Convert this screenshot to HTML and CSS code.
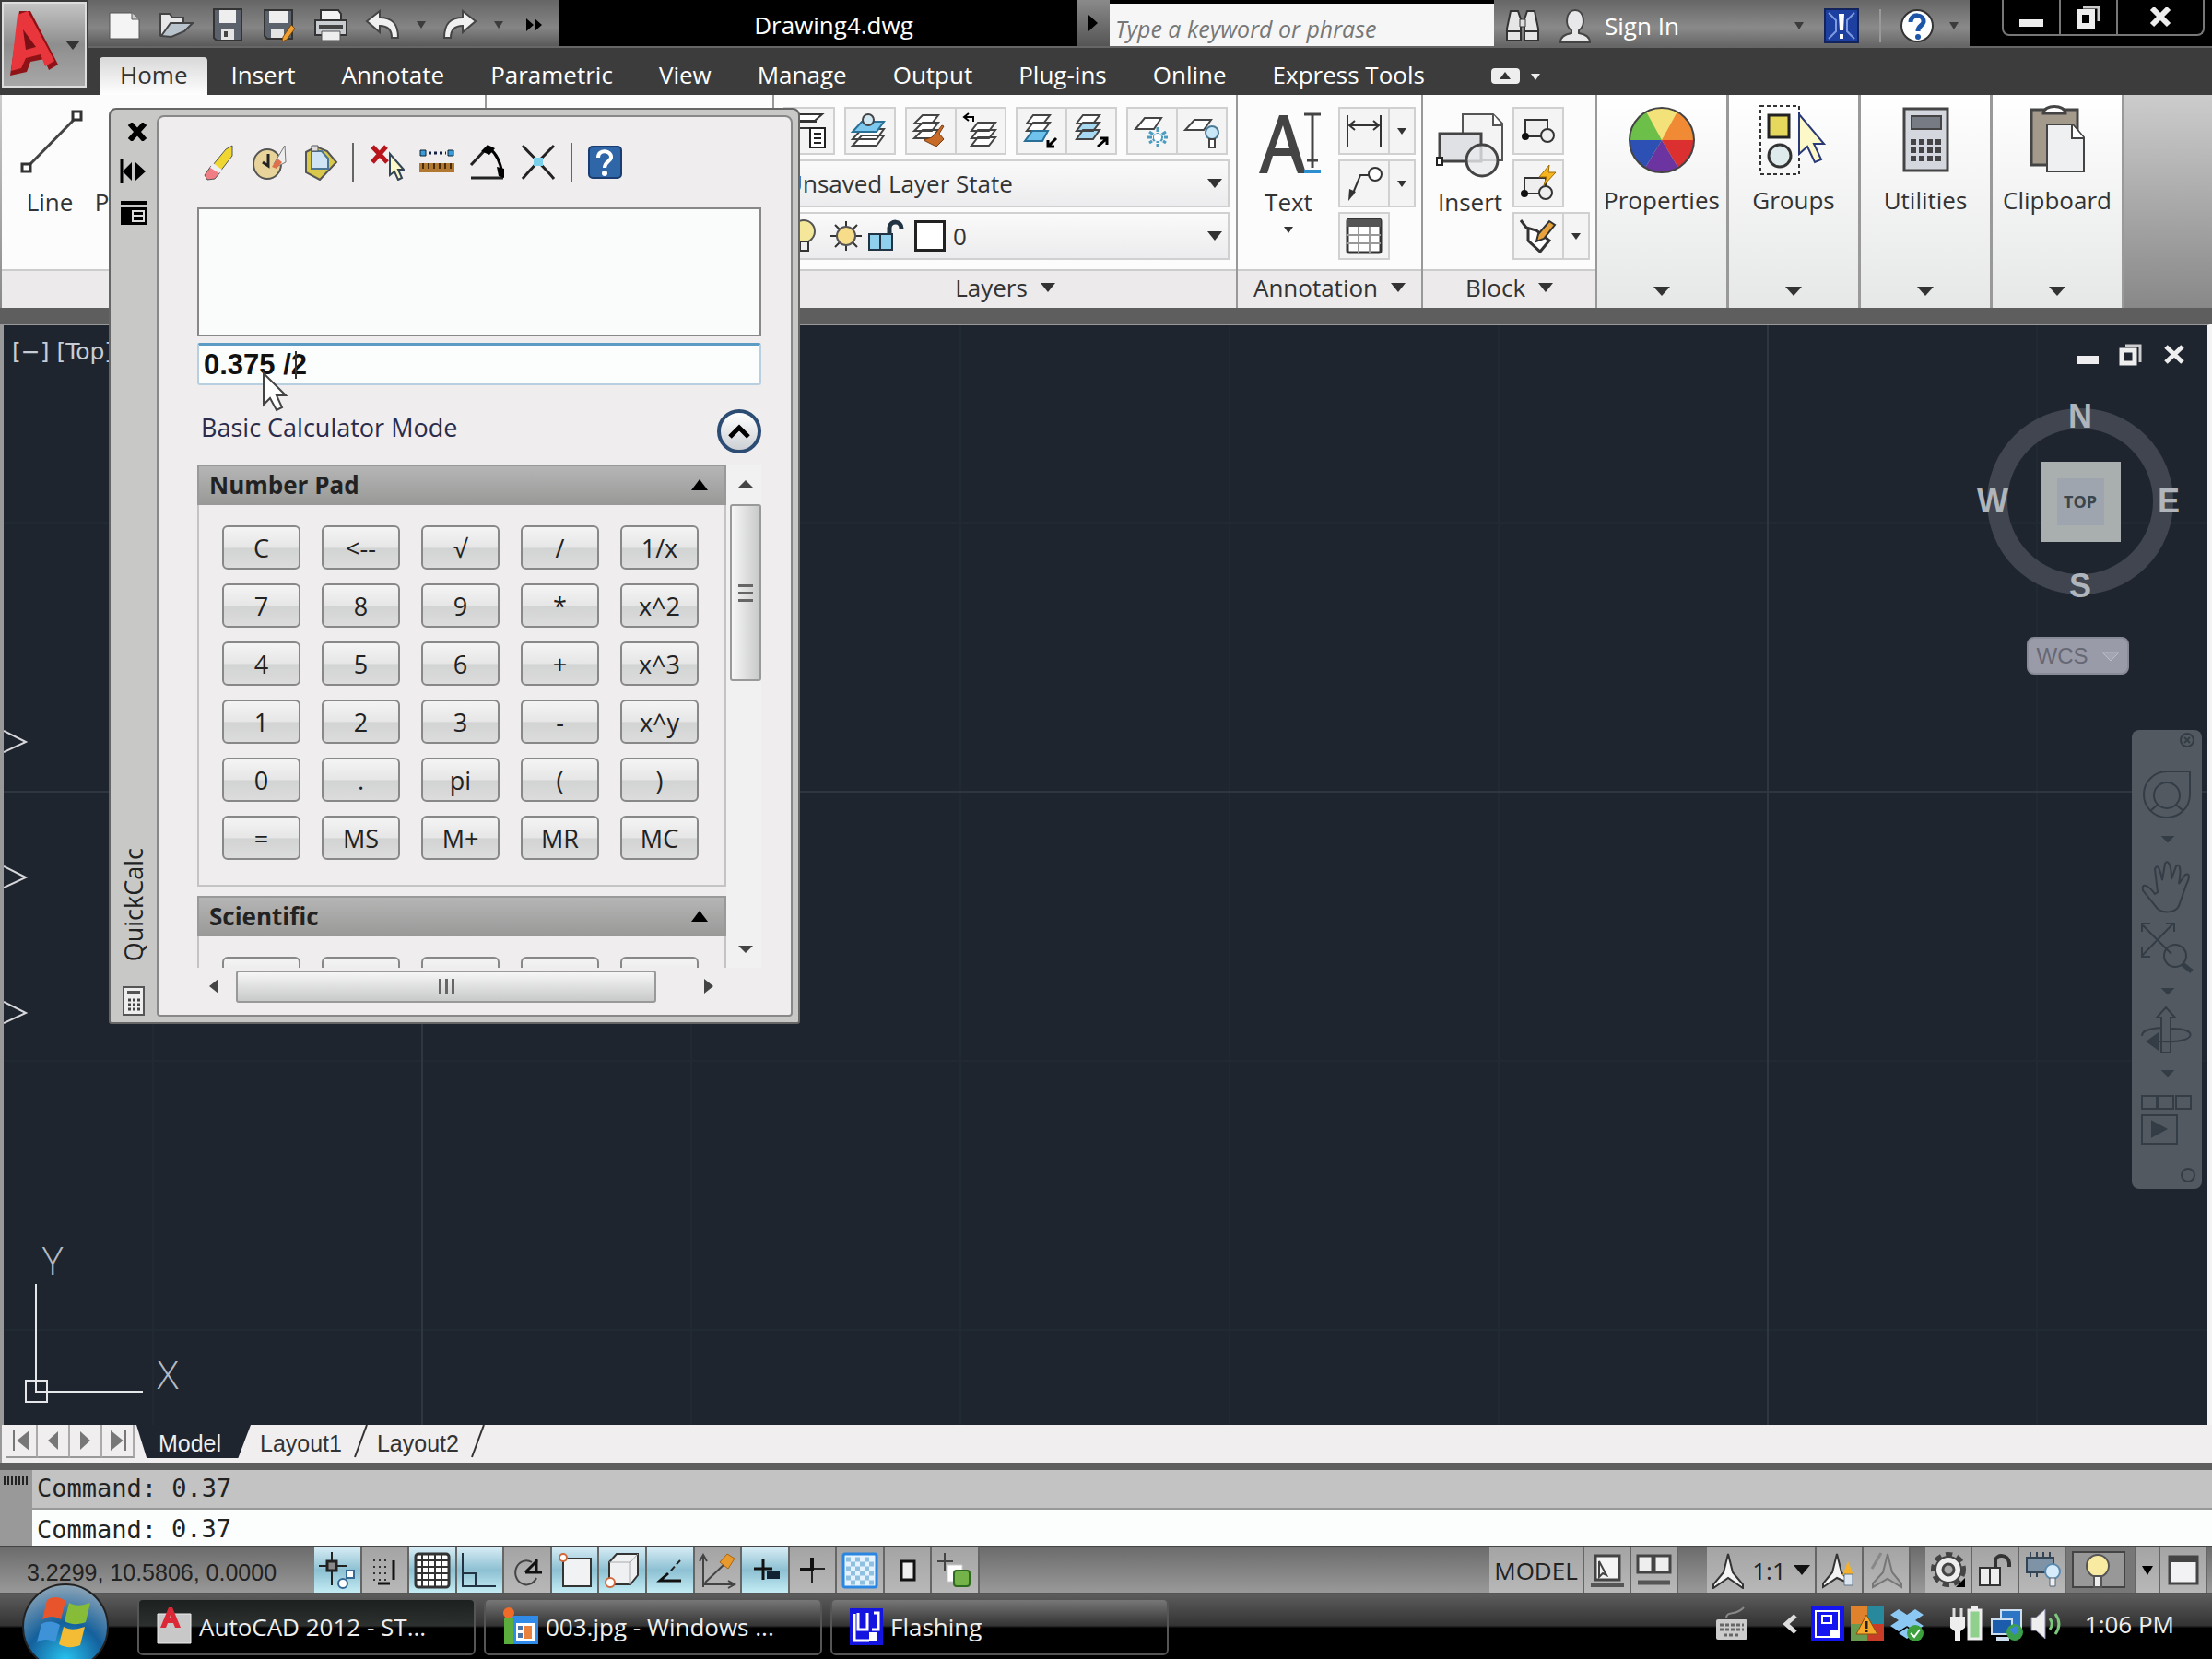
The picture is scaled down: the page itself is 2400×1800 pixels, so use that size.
FILE: index.html
```html
<!DOCTYPE html>
<html lang="en">
<head>
    <meta charset="UTF-8">
    <meta name="viewport" content="width=device-width, initial-scale=1.0">
    <title>Drawing4.dwg</title>
    <link rel="stylesheet" href="styles.css">
</head>
<body>

    <!-- Title bar and ribbon tabs -->
    <header class="header">
        <button class="app-button" aria-label="Application menu">
            <svg width="90" height="90" viewBox="0 0 90 90">
                <path d="M18 8 30 8 60 66 50 72 45 60 30 63 26 74 8 78Z" fill="#8e1216"/>
                <path d="M16 12 27 8 56 62 46 68 41 55 25 59 20 70 9 73Z" fill="#e8363c"/>
                <path d="M22 28 36 47 25 50Z" fill="#7a1015"/>
                <path d="M68 40 84 40 76 50Z" fill="#333"/>
            </svg>
        </button>

        <div class="titlebar">
            <div class="quick-access">
                <button class="qa" aria-label="New"><svg width="36" height="36" viewBox="0 0 36 36"><path d="M2 5H26L34 12V33H2Z" fill="#f4f4f4" stroke="#555"/><path d="M26 5V12H34" fill="#ccc" stroke="#555"/></svg></button>
                <button class="qa" aria-label="Open"><svg width="38" height="36" viewBox="0 0 38 36"><path d="M2 30V6H12L15 10H27V16" fill="#e8e8ea" stroke="#444" stroke-width="2"/><path d="M3 30 13 16H37L28 25 14 31Z" fill="#b9c3cc" stroke="#444" stroke-width="2"/></svg></button>
                <button class="qa" aria-label="Save"><svg width="34" height="38" viewBox="0 0 34 38"><path d="M2 2H32V36H5L2 33Z" fill="#5b626b" stroke="#333" stroke-width="2"/><path d="M8 3H26V17H8Z" fill="#eee"/><path d="M10 24H24V35H10Z" fill="#e4e4e4"/><path d="M13 26H17V32H13Z" fill="#444"/></svg></button>
                <button class="qa" aria-label="Save As"><svg width="36" height="38" viewBox="0 0 36 38"><path d="M2 3H32V34H5L2 31Z" fill="#5b626b" stroke="#333" stroke-width="2"/><path d="M7 4H27V17H7Z" fill="#eee"/><path d="M9 23H23V33H9Z" fill="#e4e4e4"/><path d="M31 19 35 23 26 35 21 37 22 32Z" fill="#f0a030" stroke="#7a4a10"/></svg></button>
                <button class="qa" aria-label="Plot"><svg width="38" height="38" viewBox="0 0 38 38"><path d="M8 3H27L30 7V15H8Z" fill="#f4f4f4" stroke="#333" stroke-width="2"/><path d="M2 14H36V30H2Z" fill="#c9ccd0" stroke="#333" stroke-width="2"/><path d="M6 19H32V23H6Z" fill="#444"/><path d="M9 26H29V36H9Z" fill="#eee" stroke="#555"/></svg></button>
                <button class="qa" aria-label="Undo"><svg width="38" height="34" viewBox="0 0 38 34"><path d="M2 13 16 2V9C29 9 36 15 36 31H29C29 23 25 18 16 18V25Z" fill="#f0f0f0" stroke="#444" stroke-width="2"/></svg></button>
                <button class="qa-arrow" aria-label="Undo list"><svg width="10" height="8"><path d="M0 0H10L5 8Z" fill="#3c3c3c"/></svg></button>
                <button class="qa" aria-label="Redo"><svg width="38" height="34" viewBox="0 0 38 34"><path d="M36 13 22 2V9C9 9 2 15 2 31H9C9 23 13 18 22 18V25Z" fill="#f0f0f0" stroke="#444" stroke-width="2"/></svg></button>
                <button class="qa-arrow" aria-label="Redo list"><svg width="10" height="8"><path d="M0 0H10L5 8Z" fill="#3c3c3c"/></svg></button>
                <button class="qa-more" aria-label="More tools"><svg width="18" height="14"><path d="M0 0 8 7 0 14ZM9 0 17 7 9 14Z" fill="#000"/></svg></button>
            </div>
            <h1 class="title">Drawing4.dwg</h1>
            <button class="search-toggle" aria-label="Collapse search"><svg width="10" height="18"><path d="M0 0 10 9 0 18Z" fill="#000"/></svg></button>
            <input class="search" type="text" placeholder="Type a keyword or phrase" aria-label="Type a keyword or phrase">
            <div class="info-center">
                <button class="qa" aria-label="Search"><svg width="38" height="38" viewBox="0 0 38 38"><path d="M6 3H14L17 12V35H2V22Z M24 3H32L36 22V35H21V12Z" fill="#e6e6e6" stroke="#333" stroke-width="2"/><path d="M16 12H22V20H16Z" fill="#ddd" stroke="#333"/><path d="M3 25H16M22 25H35" stroke="#333" stroke-width="2"/></svg></button>
                <button class="sign-in"><svg width="36" height="40" viewBox="0 0 36 40"><path d="M2 38C2 31 8 29 14 28V25C6 20 8 3 18 3S30 20 22 25V28C28 29 34 31 34 38Z" fill="#e8e8ea" stroke="#444" stroke-width="2"/></svg>Sign In</button>
                <button class="qa-arrow sign-arrow" aria-label="Sign in menu"><svg width="10" height="8"><path d="M0 0H10L5 8Z" fill="#3c3c3c"/></svg></button>
                <button class="qa" aria-label="Exchange"><svg width="38" height="38" viewBox="0 0 38 38"><path d="M1 1H37V37H1Z" fill="#1c3fa0" stroke="#13235c" stroke-width="2"/><path d="M5 5 13 13V25L5 33M33 5 25 13V25L33 33" fill="none" stroke="#7f9ae0" stroke-width="2"/><path d="M16 6H22L21 24H17ZM17 28H21V33H17Z" fill="#fff"/></svg></button>
                <span class="info-line"></span>
                <button class="qa" aria-label="Help"><svg width="38" height="38" viewBox="0 0 38 38"><circle cx="19" cy="19" r="17" fill="#fff" stroke="#333" stroke-width="2"/><path d="M12 15C12 5 27 6 26 15C25 19 20 19 20 25" fill="none" stroke="#1d55a8" stroke-width="5"/><circle cx="20" cy="31" r="3" fill="#1d55a8"/></svg></button>
                <button class="qa-arrow" aria-label="Help menu"><svg width="10" height="8"><path d="M0 0H10L5 8Z" fill="#3c3c3c"/></svg></button>
            </div>
            <div class="window-area">
                <div class="window-buttons">
                    <button class="win" aria-label="Minimize"><svg width="26" height="28"><path d="M0 16H26V24H0Z" fill="#eee"/></svg></button>
                    <button class="win" aria-label="Restore"><svg width="28" height="28"><path d="M8 3H25V18" fill="none" stroke="#ccc" stroke-width="3"/><path d="M4 8H18V23H4Z" fill="none" stroke="#eee" stroke-width="6"/></svg></button>
                    <button class="win win-close" aria-label="Close"><svg width="24" height="22"><path d="M3 1 21 19M21 1 3 19" stroke="#eee" stroke-width="6"/></svg></button>
                </div>
            </div>
        </div>

        <nav class="tabs">
            <a class="tab active" href="#">Home</a>
            <a class="tab" href="#">Insert</a>
            <a class="tab" href="#">Annotate</a>
            <a class="tab" href="#">Parametric</a>
            <a class="tab" href="#">View</a>
            <a class="tab" href="#">Manage</a>
            <a class="tab" href="#">Output</a>
            <a class="tab" href="#">Plug-ins</a>
            <a class="tab" href="#">Online</a>
            <a class="tab" href="#">Express Tools</a>
            <button class="ribbon-toggle" aria-label="Minimize ribbon"><svg width="56" height="20"><rect x="1" y="1" width="31" height="17" rx="4" fill="#eee"/><path d="M10 13 16 5 22 13Z" fill="#333"/><path d="M44 7H54L49 14Z" fill="#eee"/></svg></button>
        </nav>
    </header>

    <!-- Ribbon -->
    <section class="ribbon">
        <div class="panel panel-draw">
            <div class="panel-body">
                <button class="big"><svg width="78" height="78" viewBox="0 0 78 78"><path d="M14 66 68 11" stroke="#444" stroke-width="3"/><path d="M9 62H18V70H9ZM64 5H73V14H64Z" fill="#fff" stroke="#333" stroke-width="3"/></svg>Line</button>
                <button class="big"><svg width="78" height="78" viewBox="0 0 78 78"><path d="M14 66V30H60" fill="none" stroke="#444" stroke-width="3"/></svg>Polyline</button>
            </div>
            <div class="panel-title"></div>
        </div>
        <div class="panel panel-modify">
            <div class="panel-body"></div>
            <div class="panel-title"></div>
        </div>

        <div class="panel panel-layers">
            <div class="panel-stack">
                <div class="row end">
                    <div class="group">
                        <button class="tool" aria-label="Layer properties"><svg width="44" height="42" viewBox="0 0 44 42"><path d="M10 3H36L28 10H2ZM10 11H30M10 18H24" fill="#fff" stroke="#333" stroke-width="2"/><path d="M23 18H39V39H23Z" fill="#fff" stroke="#222" stroke-width="2"/><path d="M27 24H35M27 29H35M27 34H35" stroke="#222" stroke-width="2"/></svg></button>
                    </div>
                    <div class="group">
                        <button class="tool" aria-label="Make current"><svg width="44" height="42" viewBox="0 0 44 42"><path d="M13 26H37L29 37H3ZM13 19H37L29 30H3Z" fill="#fff" stroke="#444" stroke-width="2"/><path d="M13 11H37L29 22H3Z" fill="#7cc8ee" stroke="#2a6f96" stroke-width="2"/><circle cx="20" cy="9" r="6" fill="#cfe8f4" stroke="#444" stroke-width="2"/></svg></button>
                    </div>
                    <div class="group">
                        <button class="tool" aria-label="Match layer"><svg width="44" height="42" viewBox="0 0 44 42"><path d="M13 20H30L23 29H4ZM13 12H30L23 21H4ZM13 4H30L23 13H4Z" fill="#fff" stroke="#444" stroke-width="2"/><path d="M36 16 31 24 36 30 28 38 14 31 23 28 27 24 34 15Z" fill="#c76b28" stroke="#7a3b10"/></svg></button>
                        <button class="tool" aria-label="Layer previous"><svg width="44" height="42" viewBox="0 0 44 42"><path d="M19 28H38L31 37H12ZM19 20H38L31 29H12ZM19 12H38L31 21H12Z" fill="#fff" stroke="#444" stroke-width="2"/><path d="M4 6H14V11M9 2 4 6 9 10" fill="none" stroke="#000" stroke-width="2"/></svg></button>
                    </div>
                    <div class="group">
                        <button class="tool" aria-label="Isolate layer"><svg width="44" height="42" viewBox="0 0 44 42"><path d="M13 12H31L24 21H6ZM13 4H31L24 13H6Z" fill="#fff" stroke="#444" stroke-width="2"/><path d="M12 21H29L23 32H4Z" fill="#6fc2ec" stroke="#2a6f96" stroke-width="2"/><path d="M38 29 30 37M29 31V38H36" fill="none" stroke="#000" stroke-width="3"/></svg></button>
                        <button class="tool" aria-label="Unisolate layer"><svg width="44" height="42" viewBox="0 0 44 42"><path d="M13 4H31L24 13H6Z" fill="#fff" stroke="#444" stroke-width="2"/><path d="M13 12H31L24 21H6ZM13 20H31L24 30H6Z" fill="#a8d9f2" stroke="#444" stroke-width="2"/><path d="M29 38 38 30M31 29H39V36" fill="none" stroke="#000" stroke-width="3"/></svg></button>
                    </div>
                    <div class="group">
                        <button class="tool" aria-label="Freeze layer"><svg width="44" height="42" viewBox="0 0 44 42"><path d="M14 7H32L24 19H4Z" fill="#fff" stroke="#444" stroke-width="2"/><path d="M28 17V39M19 22 37 34M37 22 19 34M17 28H39" stroke="#4a9cc0" stroke-width="3" stroke-dasharray="5 1"/><circle cx="28" cy="28" r="4" fill="#fff"/></svg></button>
                        <button class="tool" aria-label="Turn layer off"><svg width="44" height="42" viewBox="0 0 44 42"><path d="M14 9H32L24 20H4Z" fill="#fff" stroke="#444" stroke-width="2"/><circle cx="33" cy="23" r="7" fill="#c8e8f8" stroke="#4a7c98" stroke-width="2"/><path d="M30 30H36V39H30Z" fill="#fff" stroke="#444" stroke-width="2"/></svg></button>
                    </div>
                </div>
                <div class="row combo">
                    <select class="combo-select" aria-label="Layer state"><option>Unsaved Layer State</option></select>
                    <svg class="combo-arrow" width="16" height="10"><path d="M0 0H16L8 10Z" fill="#333"/></svg>
                </div>
                <div class="row combo">
                    <svg width="140" height="44" viewBox="0 0 140 44">
                        <circle cx="20" cy="17" r="12" fill="#f5e79a" stroke="#555" stroke-width="2"/><path d="M16 28H25V38H16Z" fill="#eee" stroke="#333" stroke-width="2"/>
                        <path d="M66 6V38M49 22H83M54 10 78 34M78 10 54 34" stroke="#333" stroke-width="2"/><circle cx="66" cy="22" r="10" fill="#f7dc8a" stroke="#555" stroke-width="2"/>
                        <path d="M91 20H116V37H91ZM103 20V37" fill="#8fd0ec" stroke="#234" stroke-width="2"/><path d="M113 20V13C114 5 126 5 126 14" fill="none" stroke="#234" stroke-width="5"/>
                    </svg>
                    <span class="swatch"></span>
                    <select class="combo-select layer-select" aria-label="Layer"><option>0</option></select>
                    <svg class="combo-arrow" width="16" height="10"><path d="M0 0H16L8 10Z" fill="#333"/></svg>
                </div>
            </div>
            <div class="panel-title">Layers <svg width="16" height="10"><path d="M0 0H16L8 10Z" fill="#333"/></svg></div>
        </div>

        <div class="panel panel-annotation">
            <div class="panel-body">
                <button class="big"><svg width="78" height="78" viewBox="0 0 78 78"><path d="M7 72 29 9H38L58 72H49L42 53H22L16 72ZM24 45H40L33 20Z" fill="#444" fill-rule="evenodd"/><path d="M56 8H74M65 8V66M59 58H71" stroke="#444" stroke-width="3"/><path d="M56 70H74" stroke="#2e8fd0" stroke-width="4"/></svg>Text<svg class="big-arrow" width="10" height="7"><path d="M0 0H10L5 7Z" fill="#333"/></svg></button>
                <div class="column">
                    <div class="group">
                        <button class="tool" aria-label="Linear dimension"><svg width="44" height="42" viewBox="0 0 44 42"><path d="M4 4V38M40 4V38M6 15H38M12 10 6 15 12 20M32 10 38 15 32 20" fill="none" stroke="#333" stroke-width="2"/></svg></button>
                        <button class="drop" aria-label="Dimension list"><svg width="10" height="7"><path d="M0 0H10L5 7Z" fill="#333"/></svg></button>
                    </div>
                    <div class="group">
                        <button class="tool" aria-label="Leader"><svg width="44" height="42" viewBox="0 0 44 42"><circle cx="34" cy="11" r="7" fill="#fff" stroke="#333" stroke-width="2"/><path d="M27 12H18L9 34" fill="none" stroke="#333" stroke-width="2"/><path d="M5 40 6 27 13 30Z" fill="#333"/></svg></button>
                        <button class="drop" aria-label="Leader list"><svg width="10" height="7"><path d="M0 0H10L5 7Z" fill="#333"/></svg></button>
                    </div>
                    <div class="group">
                        <button class="tool" aria-label="Table"><svg width="44" height="42" viewBox="0 0 44 42"><rect x="4" y="3" width="36" height="36" rx="2" fill="#fff" stroke="#333" stroke-width="3"/><path d="M4 3H40V11H4Z" fill="#555"/><path d="M4 20H40M4 29H40M16 11V39M28 11V39" stroke="#999" stroke-width="2"/></svg></button>
                    </div>
                </div>
            </div>
            <div class="panel-title">Annotation <svg width="16" height="10"><path d="M0 0H16L8 10Z" fill="#333"/></svg></div>
        </div>

        <div class="panel panel-block">
            <div class="panel-body">
                <button class="big"><svg width="78" height="78" viewBox="0 0 78 78"><path d="M31 8H64L74 18V58H31Z" fill="#f4f4f4" stroke="#555" stroke-width="2"/><path d="M64 8V20H74" fill="#fff" stroke="#555" stroke-width="2"/><path d="M6 29H51V59H6Z" fill="#dfe1e4" stroke="#444" stroke-width="3"/><circle cx="52" cy="58" r="17" fill="#e8eaec" fill-opacity="0.8" stroke="#444" stroke-width="3"/><path d="M3 55H9V63H3Z" fill="#fff" stroke="#222" stroke-width="2"/></svg>Insert</button>
                <div class="column">
                    <div class="group"><button class="tool" aria-label="Create block"><svg width="44" height="42" viewBox="0 0 44 42"><path d="M8 9H32V27H8Z" fill="#eee" stroke="#333" stroke-width="2"/><circle cx="32" cy="26" r="7" fill="#eee" stroke="#333" stroke-width="2"/><circle cx="8" cy="27" r="4" fill="#111"/></svg></button></div>
                    <div class="group"><button class="tool" aria-label="Edit block"><svg width="44" height="42" viewBox="0 0 44 42"><path d="M7 15H30V32H7Z" fill="#eee" stroke="#333" stroke-width="2"/><circle cx="30" cy="31" r="7" fill="#eee" stroke="#333" stroke-width="2"/><circle cx="7" cy="32" r="4" fill="#111"/><path d="M34 1 23 14H31L28 23 41 9H33Z" fill="#f5b51e" stroke="#a06a00"/></svg></button></div>
                    <div class="group"><button class="tool" aria-label="Edit attributes"><svg width="44" height="42" viewBox="0 0 44 42"><path d="M3 4 9 12 20 15 34 26 24 38 11 26V14" fill="#fff" stroke="#333" stroke-width="3"/><path d="M34 5 40 9 28 24 20 27 22 19Z" fill="#e8a23c" stroke="#333" stroke-width="2"/></svg></button><button class="drop" aria-label="Attribute list"><svg width="10" height="7"><path d="M0 0H10L5 7Z" fill="#333"/></svg></button></div>
                </div>
            </div>
            <div class="panel-title">Block <svg width="16" height="10"><path d="M0 0H16L8 10Z" fill="#333"/></svg></div>
        </div>

        <button class="panel panel-small">
            <svg width="78" height="78" viewBox="0 0 78 78"><circle cx="39" cy="39" r="35" fill="#f3e27a"/><path d="M39 39 22 8A35 35 0 0 0 4 39Z" fill="#6cc04a"/><path d="M39 39 56 8A35 35 0 0 1 74 39Z" fill="#f08a34"/><path d="M39 39H74A35 35 0 0 1 57 69Z" fill="#dc3030"/><path d="M39 39 57 69A35 35 0 0 1 21 69Z" fill="#6c34a0"/><path d="M39 39 21 69A35 35 0 0 1 4 39Z" fill="#2c50b4"/><circle cx="39" cy="39" r="35" fill="none" stroke="#444" stroke-width="2"/></svg>
            <span>Properties</span>
            <svg class="small-arrow" width="18" height="10"><path d="M0 0H18L9 10Z" fill="#333"/></svg>
        </button>
        <button class="panel panel-small">
            <svg width="78" height="78" viewBox="0 0 78 78"><path d="M3 2H45V76H3Z" fill="none" stroke="#333" stroke-width="2" stroke-dasharray="4 3"/><path d="M12 12H34V36H12Z" fill="#e6d85c" stroke="#222" stroke-width="3"/><circle cx="24" cy="56" r="12" fill="#dfeaec" stroke="#333" stroke-width="3"/><path d="M45 11V54L54 46 62 63 69 60 61 43H72Z" fill="#fdf8c8" stroke="#2a3a78" stroke-width="2"/></svg>
            <span>Groups</span>
            <svg class="small-arrow" width="18" height="10"><path d="M0 0H18L9 10Z" fill="#333"/></svg>
        </button>
        <button class="panel panel-small">
            <svg width="78" height="78" viewBox="0 0 78 78"><path d="M16 5H63V72H16Z" fill="#d4d8de" stroke="#444" stroke-width="3"/><path d="M24 13H56V27H24Z" fill="#777c84" stroke="#444" stroke-width="2"/><path d="M23 41H58M23 50H58M23 59H58" stroke="#444" stroke-width="6" stroke-dasharray="6 3"/></svg>
            <span>Utilities</span>
            <svg class="small-arrow" width="18" height="10"><path d="M0 0H18L9 10Z" fill="#333"/></svg>
        </button>
        <button class="panel panel-small">
            <svg width="78" height="78" viewBox="0 0 78 78"><path d="M11 6H61V66H11Z" fill="#a39a8c" stroke="#444" stroke-width="3"/><path d="M24 10C24 0 48 0 48 10Z" fill="#fff" stroke="#444" stroke-width="3"/><path d="M28 22H56L68 36V73H28Z" fill="#eef0f2" stroke="#444" stroke-width="2"/><path d="M55 22V37H68" fill="#fff" stroke="#444" stroke-width="2"/></svg>
            <span>Clipboard</span>
            <svg class="small-arrow" width="18" height="10"><path d="M0 0H18L9 10Z" fill="#333"/></svg>
        </button>
    </section>

    <!-- Drawing area -->
    <main class="canvas">
        <span class="view-label">[−] [Top]</span>

        <svg class="geometry" width="40" height="340"><path d="M0 6 24 18 0 29M0 153 24 165 0 176M0 300 24 312 0 323" fill="none" stroke="#d8d8dc" stroke-width="2"/></svg>

        <svg class="ucs" width="190" height="190">
            <path d="M15 50V167H131M4 155H27V178H4Z" fill="none" stroke="#e4e6ea" stroke-width="2"/>
            <text class="ucs-text" x="33" y="40" text-anchor="middle">Y</text>
            <text class="ucs-text" x="158" y="164" text-anchor="middle">X</text>
        </svg>

        <div class="doc-buttons">
            <button aria-label="Minimize drawing"><svg width="24" height="24"><path d="M0 13H24V22H0Z" fill="#eee"/></svg></button>
            <button aria-label="Restore drawing"><svg width="26" height="24"><path d="M7 2H23V20" fill="none" stroke="#ccc" stroke-width="3"/><path d="M3 7H17V21H3Z" fill="none" stroke="#eee" stroke-width="5"/></svg></button>
            <button aria-label="Close drawing"><svg width="24" height="24"><path d="M3 3 21 20M21 3 3 20" stroke="#eee" stroke-width="5"/></svg></button>
        </div>

        <div class="viewcube">
            <span class="north">N</span>
            <span class="west">W</span>
            <button class="cube-face"><span>TOP</span></button>
            <span class="east">E</span>
            <span class="south">S</span>
        </div>
        <button class="wcs">WCS <svg width="20" height="12"><path d="M1 2H19L10 11Z" fill="#a4a5b2" stroke="#bcbdc8"/></svg></button>

        <div class="navbar">
            <svg width="76" height="498" fill="none" stroke="#343c45" stroke-width="2">
                <circle cx="60" cy="11" r="7"/><path d="M57 8 63 14M63 8 57 14"/>
                <path d="M63 45H38A25 25 0 1 0 63 71Z"/><circle cx="38" cy="71" r="14"/><path d="M20 88 28 81M56 88 48 81"/>
                <path d="M34 116H44L39 121Z" fill="#343c45"/>
                <path d="M12 174C10 166 17 167 25 178L28 176 25 151C27 146 30 147 33 163L36 145C38 141 43 143 43 162L48 148C52 144 54 150 51 167L58 157C63 155 63 160 59 168L51 191C47 199 34 199 28 194Z"/>
                <path d="M12 212 43 243M45 210 11 245M11 219V210H20M37 210H46V219M11 236V246H20"/><circle cx="47" cy="245" r="12"/><path d="M55 254 65 262" stroke-width="5"/>
                <path d="M34 281H44L39 286Z" fill="#343c45"/>
                <path d="M32 350V312H27L37 301 47 312H42V350ZM42 324C72 323 72 340 34 338H18M32 323C16 324 11 327 11 332"/><path d="M28 330V346L17 338Z" fill="#343c45"/>
                <path d="M34 370H44L39 375Z" fill="#343c45"/>
                <path d="M11 397H27V411H11ZM29 397H45V411H29ZM48 397H64V411H48ZM11 418H49V449H11Z"/><path d="M22 425V441L37 433Z" fill="#343c45"/>
                <circle cx="61" cy="483" r="7"/>
            </svg>
        </div>
    </main>

    <!-- Layout tabs -->
    <div class="layouts">
        <button class="step" aria-label="First"><svg width="20" height="22"><path d="M2 0V22M18 2V20L7 11Z" fill="#777" stroke="#777" stroke-width="2"/></svg></button>
        <button class="step" aria-label="Previous"><svg width="20" height="22"><path d="M15 1V21L4 11Z" fill="#777"/></svg></button>
        <button class="step" aria-label="Next"><svg width="20" height="22"><path d="M4 1V21L15 11Z" fill="#777"/></svg></button>
        <button class="step" aria-label="Last"><svg width="20" height="22"><path d="M18 0V22M3 2V20L14 11Z" fill="#777" stroke="#777" stroke-width="2"/></svg></button>
        <button class="layout-tab current">Model</button>
        <button class="layout-tab">Layout1</button>
        <svg class="slash" width="16" height="36"><path d="M15 0 2 35" stroke="#333" stroke-width="2"/></svg>
        <button class="layout-tab">Layout2</button>
        <svg class="slash" width="16" height="36"><path d="M15 0 2 35" stroke="#333" stroke-width="2"/></svg>
    </div>

    <!-- Command window -->
    <section class="command">
        <div class="grip"></div>
        <div class="command-lines">
            <div class="history">Command: 0.37</div>
            <label class="prompt"><span>Command:</span><input type="text" value="0.37" aria-label="Command"></label>
        </div>
    </section>

    <!-- Status bar -->
    <footer class="status">
        <span class="coords">3.2299, 10.5806, 0.0000</span>
        <div class="toggles">
            <button class="on" aria-label="Infer constraints"><svg width="44" height="44" viewBox="0 0 44 44"><path d="M16 2V38M2 17H32" stroke="#222" stroke-width="2"/><path d="M11 12H21V22H11Z" fill="#888" stroke="#222" stroke-width="3"/><circle cx="28" cy="36" r="5" fill="#fff" stroke="#356a94" stroke-width="2"/><path d="M32 22H40V30H32Z" fill="#fff" stroke="#356a94" stroke-width="2"/></svg></button>
            <button aria-label="Snap"><svg width="44" height="44" viewBox="0 0 44 44"><path d="M10 11H28M10 18H28M10 25H28M10 32H28" stroke="#333" stroke-width="2" stroke-dasharray="2 4"/><path d="M32 11V32M15 36H28" stroke="#111" stroke-width="3"/></svg></button>
            <button class="on" aria-label="Grid"><svg width="44" height="44" viewBox="0 0 44 44"><rect x="4" y="4" width="36" height="36" rx="3" fill="#fff" stroke="#333" stroke-width="3"/><path d="M4 11H40M4 18H40M4 25H40M4 32H40M11 4V40M18 4V40M25 4V40M32 4V40" stroke="#333" stroke-width="2"/></svg></button>
            <button class="on" aria-label="Ortho"><svg width="44" height="44" viewBox="0 0 44 44"><path d="M4 3V39H40M4 25H18V39" fill="none" stroke="#234" stroke-width="2"/></svg></button>
            <button aria-label="Polar"><svg width="44" height="44" viewBox="0 0 44 44"><path d="M27 13A12 13 0 1 0 32 30" fill="none" stroke="#444" stroke-width="2"/><path d="M20 24 33 11M20 24H38M32 10V24" fill="none" stroke="#111" stroke-width="3"/></svg></button>
            <button class="on" aria-label="Object snap"><svg width="44" height="44" viewBox="0 0 44 44"><path d="M9 9H39V39H9Z" fill="#f0f2f4" stroke="#333" stroke-width="2"/><circle cx="9" cy="8" r="4" fill="#fff" stroke="#d2693c" stroke-width="2"/></svg></button>
            <button class="on" aria-label="3D object snap"><svg width="44" height="44" viewBox="0 0 44 44"><path d="M8 13 16 4H39V27L31 37H8Z" fill="#eef0f2" stroke="#333" stroke-width="2"/><path d="M31 37V13H8M31 13 39 4" fill="none" stroke="#aaa"/><circle cx="9" cy="35" r="5" fill="#fff" stroke="#d2693c" stroke-width="2"/></svg></button>
            <button class="on" aria-label="Object tracking"><svg width="44" height="44" viewBox="0 0 44 44"><path d="M33 11 22 23" stroke="#222" stroke-width="2" stroke-dasharray="6 3"/><path d="M20 25 11 33H34" fill="none" stroke="#111" stroke-width="3"/></svg></button>
            <button aria-label="Dynamic UCS"><svg width="44" height="44" viewBox="0 0 44 44"><path d="M7 40V6M3 12 7 5 11 12M7 37H40M34 33 41 37 34 41M9 35 30 15" fill="none" stroke="#444" stroke-width="2"/><path d="M33 4 41 9 34 20 25 13Z" fill="#e99a2c" stroke="#a86414"/></svg></button>
            <button class="on" aria-label="Dynamic input"><svg width="44" height="44" viewBox="0 0 44 44"><path d="M20 10V32M10 20H30" stroke="#111" stroke-width="3"/><path d="M24 23H38V31H24Z" fill="#123"/></svg></button>
            <button aria-label="Lineweight"><svg width="44" height="44" viewBox="0 0 44 44"><path d="M22 22V36M22 20H36" stroke="#222" stroke-width="2"/><path d="M22 8V21H9" fill="none" stroke="#111" stroke-width="4"/></svg></button>
            <button aria-label="Transparency"><svg width="44" height="44" viewBox="0 0 44 44"><rect x="4" y="4" width="36" height="36" rx="2" fill="#e4f3ff" stroke="#2a86e0" stroke-width="3"/><path d="M7 10H37M7 20H37M7 30H37" stroke="#8fc0e0" stroke-width="5" stroke-dasharray="5 5"/><path d="M12 15H37M12 25H37M12 35H37" stroke="#8fc0e0" stroke-width="5" stroke-dasharray="5 5"/></svg></button>
            <button aria-label="Quick properties"><svg width="44" height="44" viewBox="0 0 44 44"><path d="M15 12H29V32H15Z" fill="#eee" stroke="#111" stroke-width="3"/></svg></button>
            <button aria-label="Selection cycling"><svg width="44" height="44" viewBox="0 0 44 44"><path d="M11 3V22M3 12H20" stroke="#444" stroke-width="2"/><path d="M14 16H30V34H14Z" fill="#fff" stroke="#ccc"/><rect x="21" y="22" width="17" height="17" rx="3" fill="#74b24a" stroke="#2f6b1c" stroke-width="2"/></svg></button>
        </div>
        <div class="status-right">
            <button class="model">MODEL</button>
            <button aria-label="Layout"><svg width="44" height="44" viewBox="0 0 44 44"><path d="M9 6H35V32H9Z" fill="#f4f4f4" stroke="#444" stroke-width="3"/><path d="M13 29V12L21 27 17 25Z" fill="none" stroke="#444" stroke-width="2"/><path d="M4 38H40" stroke="#555" stroke-width="4"/></svg></button>
            <button aria-label="Quick view"><svg width="44" height="44" viewBox="0 0 44 44"><path d="M4 6H20V24H4ZM22 6H39V24H22Z" fill="#eee" stroke="#444" stroke-width="3"/><path d="M4 35H39" stroke="#555" stroke-width="5"/></svg></button>
            <span class="space"></span>
            <button class="scale"><svg width="36" height="40" viewBox="0 0 36 40"><path d="M18 2 23 22 34 35V39L18 28 2 39V35L13 22Z" fill="#f4f4f4" stroke="#333" stroke-width="2"/></svg>1:1<svg width="18" height="11"><path d="M0 0H18L9 11Z" fill="#111"/></svg></button>
            <button aria-label="Annotation visibility"><svg width="44" height="44" viewBox="0 0 44 44"><path d="M19 4 24 24 35 37 19 30 4 40V36L14 24Z" fill="#f4f4f4" stroke="#333" stroke-width="2"/><path d="M31 12 25 27H37Z" fill="#f4b02a"/><path d="M27 26H36V38H27Z" fill="#dbe6f0" stroke="#678"/></svg></button>
            <button aria-label="Auto scale"><svg width="44" height="44" viewBox="0 0 44 44"><path d="M23 4 28 24 38 36V40L23 31 7 40V36L18 24Z" fill="#aaa" stroke="#777" stroke-width="2"/><path d="M16 3 6 20" stroke="#888" stroke-width="3"/></svg></button>
            <span class="space narrow"></span>
            <button aria-label="Workspace"><svg width="44" height="44" viewBox="0 0 44 44"><circle cx="22" cy="21" r="16" fill="none" stroke="#444" stroke-width="6" stroke-dasharray="7 5"/><circle cx="22" cy="21" r="14" fill="#eee" stroke="#444" stroke-width="2"/><circle cx="22" cy="21" r="6" fill="#aaa" stroke="#444" stroke-width="3"/><path d="M40 30V40H30Z" fill="#000"/></svg></button>
            <button aria-label="Lock"><svg width="44" height="44" viewBox="0 0 44 44"><path d="M5 19H27V38H5ZM16 19V38" fill="#eee" stroke="#333" stroke-width="2"/><path d="M22 18V11C23 4 36 4 37 14V18" fill="none" stroke="#333" stroke-width="4"/></svg></button>
            <button aria-label="Hardware acceleration"><svg width="44" height="44" viewBox="0 0 44 44"><path d="M5 8H34V24H5Z" fill="#7f93a6" stroke="#345" stroke-width="2"/><path d="M9 2V8M16 2V8M23 2V8M30 2V8M9 24V29M16 24V29" stroke="#345" stroke-width="2"/><circle cx="33" cy="23" r="8" fill="#d6ecfa" stroke="#5a8ab0" stroke-width="2"/><path d="M30 30H36V39H30Z" fill="#eee" stroke="#567"/></svg></button>
            <button class="bulb" aria-label="Isolate objects"><svg width="64" height="44" viewBox="0 0 64 44"><path d="M2 2H58V40H2Z" fill="#989898" stroke="#444" stroke-width="2"/><circle cx="29" cy="17" r="12" fill="#f8eaa0" stroke="#555" stroke-width="2"/><path d="M25 28H33V40H25Z" fill="#eee" stroke="#555" stroke-width="2"/></svg></button>
            <button class="thin" aria-label="Status menu"><svg width="12" height="10"><path d="M0 0H12L6 10Z" fill="#000"/></svg></button>
            <button aria-label="Clean screen"><svg width="44" height="44" viewBox="0 0 44 44"><path d="M7 7H37V36H7Z" fill="#f2f2f4" stroke="#444" stroke-width="3"/><path d="M7 6H37V13H7Z" fill="#444"/></svg></button>
        </div>
    </footer>

    <!-- Taskbar -->
    <nav class="taskbar">
        <button class="start" aria-label="Start">
            <svg width="96" height="82" viewBox="0 0 96 82">
                <defs>
                    <radialGradient id="orb" cx="0.5" cy="0.9" r="0.9"><stop offset="0" stop-color="#28c4f0"/><stop offset="0.5" stop-color="#14609c"/><stop offset="1" stop-color="#8fa6b8"/></radialGradient>
                </defs>
                <circle cx="48" cy="47" r="46" fill="url(#orb)" stroke="#222" stroke-width="2"/>
                <path d="M28 18C34 14 41 14 48 19L43 39C36 35 30 35 23 39Z" fill="#e8552c"/>
                <path d="M52 21C59 25 66 24 75 21L70 42C62 45 54 45 47 41Z" fill="#86bc38"/>
                <path d="M22 44C29 40 36 41 42 45L37 64C30 60 24 60 17 64Z" fill="#3d92d8"/>
                <path d="M46 47C53 51 60 50 69 47L64 67C56 70 48 70 41 66Z" fill="#f4bc34"/>
            </svg>
        </button>
        <button class="task active-task"><svg width="40" height="42" viewBox="0 0 40 42"><path d="M2 7H38V39H2Z" fill="#c8c8c8" stroke="#eee"/><path d="M5 22 14 0H18L27 22H21L19 17H13L11 22ZM15 12H17L16 8Z" fill="#dc2836" fill-rule="evenodd"/></svg>AutoCAD 2012 - ST...</button>
        <button class="task"><svg width="40" height="42" viewBox="0 0 40 42"><path d="M10 9H39V40H10Z" fill="#2f8ae8"/><path d="M15 17H35V36H15Z" fill="#fff"/><path d="M24 20H32V34H24Z" fill="#e8823c"/><path d="M17 20H22V25H17ZM17 28H22V33H17Z" fill="#4a74a8"/><path d="M2 11H12V40H2Z" fill="#5cae3c"/><circle cx="7" cy="6" r="6" fill="#f06a28"/></svg>003.jpg - Windows ...</button>
        <button class="task"><svg width="38" height="42" viewBox="0 0 38 42"><path d="M1 1H37V41H1Z" fill="#1414e0"/><path d="M6 7V36H22M10 6V24H20V6M27 6H32V24H25" fill="none" stroke="#fff" stroke-width="3"/><path d="M22 27H31V37H22Z" fill="#fff"/></svg>Flashing</button>
        <div class="tray">
            <svg class="keyboard" width="36" height="40" viewBox="0 0 36 40"><path d="M12 14C12 5 22 12 31 2" fill="none" stroke="#888" stroke-width="2"/><rect x="1" y="15" width="34" height="22" rx="2" fill="#ccc"/><path d="M5 21H31M5 26H31M9 32H27" stroke="#666" stroke-width="3" stroke-dasharray="4 2"/></svg>
            <svg class="chevron" width="18" height="22"><path d="M15 2 5 11 15 20" fill="none" stroke="#ddd" stroke-width="5"/></svg>
            <svg width="38" height="40" viewBox="0 0 38 40"><path d="M1 1H37V39H1Z" fill="#1414f0"/><path d="M6 6H31V34H6Z" fill="none" stroke="#fff" stroke-width="2"/><path d="M13 11H23V19H13Z" fill="none" stroke="#fff" stroke-width="2"/><path d="M22 26H30V34H22Z" fill="#fff"/></svg>
            <svg width="38" height="40" viewBox="0 0 38 40"><path d="M1 1H19V20H1Z" fill="#e0822c"/><path d="M19 1H37V20H19Z" fill="#28889c"/><path d="M1 20H19V39H1Z" fill="#6a9a50"/><path d="M19 20H37V39H19Z" fill="#c83c28"/><path d="M18 10 30 31H7Z" fill="#f4a82c" stroke="#8c4a10"/><path d="M18 17V25M18 27V29" stroke="#222" stroke-width="3"/></svg>
            <svg width="38" height="40" viewBox="0 0 38 40"><path d="M10 4 19 10 10 16 1 10ZM28 4 37 10 28 16 19 10ZM10 16 19 22 10 28 1 22ZM28 16 37 22 28 28 19 22ZM10 30 19 24 28 30 19 36ZM19 10 28 16 19 22 10 16Z" fill="#8cc8f4"/><circle cx="28" cy="30" r="9" fill="#3ca03c"/><path d="M23 30 27 34 33 26" fill="none" stroke="#fff" stroke-width="2"/></svg>
            <svg class="power" width="38" height="40" viewBox="0 0 38 40"><path d="M5 3V12M13 3V12" stroke="#ddd" stroke-width="3"/><path d="M1 12H17V24L12 28V38H6V28L1 24Z" fill="#eee"/><path d="M21 5H34V36H21Z" fill="#8fd08c" stroke="#eee" stroke-width="3"/><path d="M24 1H31V5H24Z" fill="#eee"/></svg>
            <svg width="38" height="40" viewBox="0 0 38 40"><path d="M13 5H35V24H13Z" fill="#2c74c4" stroke="#cde" stroke-width="2"/><path d="M3 15H25V31H3Z" fill="#1c5cac" stroke="#cde" stroke-width="2"/><path d="M8 36H22" stroke="#cde" stroke-width="4"/><circle cx="28" cy="29" r="9" fill="#3aa04c"/><path d="M22 26 29 22 33 27 28 32Z" fill="#3c84d8"/></svg>
            <svg width="38" height="40" viewBox="0 0 38 40"><path d="M3 13H8L18 4V36L8 27H3Z" fill="#eee" stroke="#88a"/><path d="M23 14C26 18 26 22 23 26M29 9C34 16 34 24 29 31" fill="none" stroke="#7cc87c" stroke-width="3"/></svg>
            <time class="clock">1:06 PM</time>
        </div>
    </nav>

    <!-- QuickCalc palette -->
    <aside class="palette">
        <div class="palette-side">
            <button class="palette-close" aria-label="Close"><svg width="22" height="20"><path d="M3 1 19 19M19 1 3 19" stroke="#000" stroke-width="6"/></svg></button>
            <button class="autohide" aria-label="Auto-hide"><svg width="30" height="26"><path d="M2 0V26" stroke="#000" stroke-width="3"/><path d="M13 3V23L3 13ZM17 3V23L28 13Z" fill="#000"/></svg></button>
            <button aria-label="Properties"><svg width="28" height="26"><path d="M0 0H28V4H0ZM0 7H28V26H0Z" fill="#000"/><path d="M13 11H25V22H13ZM14 16H25" fill="none" stroke="#ddd" stroke-width="2"/></svg></button>
            <h2 class="palette-name">QuickCalc</h2>
            <svg class="palette-icon" width="26" height="34"><path d="M2 2H24V32H2Z" fill="#eee" stroke="#555" stroke-width="2"/><path d="M6 8H20" stroke="#555" stroke-width="4"/><path d="M7 16H20M7 21H20M7 26H20" stroke="#444" stroke-width="3" stroke-dasharray="3 2"/></svg>
        </div>

        <div class="palette-main">
            <div class="calc-tools">
                <button aria-label="Clear"><svg width="40" height="40" viewBox="0 0 40 40"><path d="M35 2V13L18 35 9 29 28 6Z" fill="#f0d630" stroke="#555"/><path d="M12 24 22 31 16 38 8 39 5 34Z" fill="#f07c84" stroke="#555"/><path d="M14 21 24 28 21 32 11 26Z" fill="#eee"/></svg></button>
                <button aria-label="Clear history"><svg width="40" height="40" viewBox="0 0 40 40"><ellipse cx="18" cy="22" rx="15" ry="16" fill="#e8d49a" stroke="#555" stroke-width="2"/><path d="M19 11V24L13 20" fill="none" stroke="#222" stroke-width="3"/><path d="M37 2 38 20 30 24 25 22Z" fill="#eee" stroke="#777"/><path d="M29 16 34 20 28 27 23 25Z" fill="#e0704c"/></svg></button>
                <button aria-label="Paste value"><svg width="40" height="40" viewBox="0 0 40 40"><path d="M5 9 16 3 28 8 38 20 20 39 5 31Z" fill="#d8c84c" stroke="#555" stroke-width="2"/><path d="M11 8H22L29 16V27H11Z" fill="#cfe4f4" stroke="#4c7494" stroke-width="2"/><path d="M11 2H18V8H11Z" fill="#ddd" stroke="#555"/></svg></button>
                <span class="tool-line"></span>
                <button aria-label="Get coordinates"><svg width="40" height="40" viewBox="0 0 40 40"><path d="M5 3 21 20M20 3 5 20" stroke="#b8141c" stroke-width="5"/><path d="M24 11V34L29 30 33 39 37 37 33 28H39Z" fill="#fdf8c8" stroke="#345" stroke-width="2"/></svg></button>
                <button aria-label="Distance"><svg width="40" height="40" viewBox="0 0 40 40"><path d="M2 7H8V13H2ZM32 7H38V13H32Z" fill="#3c9cd8" stroke="#123"/><path d="M11 10H30" stroke="#124" stroke-width="3" stroke-dasharray="3 3"/><path d="M1 21H39V31H1Z" fill="#b07830"/><path d="M5 21V27M11 21V27M17 21V27M23 21V27M29 21V27M35 21V27" stroke="#4a2c08" stroke-width="2"/></svg></button>
                <button aria-label="Angle"><svg width="40" height="40" viewBox="0 0 40 40"><path d="M2 23 17 7M2 37H37" stroke="#222" stroke-width="3"/><path d="M22 5C30 11 34 19 36 33" fill="none" stroke="#000" stroke-width="3"/><path d="M13 8 20 1 28 5 22 12ZM30 25 38 27 38 37 32 35Z" fill="#000"/></svg></button>
                <button aria-label="Intersection"><svg width="40" height="40" viewBox="0 0 40 40"><path d="M3 2C10 10 29 28 37 38M37 2C29 10 11 28 3 38" fill="none" stroke="#222" stroke-width="3"/><path d="M15 15H25V24H15Z" fill="#7cd0ec"/></svg></button>
                <span class="tool-line"></span>
                <button aria-label="Help"><svg width="40" height="40" viewBox="0 0 40 40"><rect x="3" y="3" width="35" height="34" rx="4" fill="#2f66a8" stroke="#1a3c70" stroke-width="2"/><path d="M13 15C13 5 28 7 27 15C26 20 20 19 20 26" fill="none" stroke="#fff" stroke-width="4"/><circle cx="20" cy="32" r="3" fill="#fff"/></svg></button>
            </div>

            <textarea class="calc-history" aria-label="History" readonly></textarea>
            <input class="calc-input" type="text" value="0.375 /2" aria-label="Expression">

            <div class="mode-row">
                <span>Basic Calculator Mode</span>
                <button class="mode-toggle" aria-label="Less"><svg width="26" height="18"><path d="M3 15 13 5 23 15" fill="none" stroke="#000" stroke-width="5"/></svg></button>
            </div>

            <div class="pad-scroll">
                <div class="pads">
                    <h3 class="pad-title">Number Pad <svg width="18" height="12"><path d="M0 12 9 0 18 12Z" fill="#000"/></svg></h3>
                    <div class="pad">
                        <button>C</button><button>&lt;--</button><button>√</button><button>/</button><button>1/x</button>
                        <button>7</button><button>8</button><button>9</button><button>*</button><button>x^2</button>
                        <button>4</button><button>5</button><button>6</button><button>+</button><button>x^3</button>
                        <button>1</button><button>2</button><button>3</button><button>-</button><button>x^y</button>
                        <button>0</button><button>.</button><button>pi</button><button>(</button><button>)</button>
                        <button>=</button><button>MS</button><button>M+</button><button>MR</button><button>MC</button>
                    </div>
                    <h3 class="pad-title">Scientific <svg width="18" height="12"><path d="M0 12 9 0 18 12Z" fill="#000"/></svg></h3>
                    <div class="pad">
                        <button></button><button></button><button></button><button></button><button></button>
                    </div>
                </div>
                <div class="vscroll">
                    <svg width="16" height="8"><path d="M0 8 8 0 16 8Z" fill="#444"/></svg>
                    <div class="vthumb"></div>
                    <svg class="scroll-end" width="16" height="8"><path d="M0 0H16L8 8Z" fill="#444"/></svg>
                </div>
                <div class="hscroll">
                    <svg width="10" height="16"><path d="M10 0V16L0 8Z" fill="#444"/></svg>
                    <div class="hthumb"></div>
                    <svg class="scroll-end" width="10" height="16"><path d="M0 0V16L10 8Z" fill="#444"/></svg>
                </div>
            </div>
        </div>

        <span class="caret"></span>
        <svg class="pointer" width="28" height="44"><path d="M2 2V36L9 29 16 42 22 39 16 26H26Z" fill="#fff" stroke="#444" stroke-width="2"/></svg>
    </aside>

</body>
</html>
```

FILE: styles.css
```css
* {
    box-sizing: border-box;
}

body {
    margin: 0;
    height: 100vh;
    display: flex;
    flex-direction: column;
    overflow: hidden;
    position: relative;
    font-family: "Open Sans", "Noto Sans", sans-serif;
    font-size: 26px;
    color: #333;
    background-color: #5c5c5c;
}

button {
    font: inherit;
    color: inherit;
    padding: 0;
    border: none;
    background: none;
    display: flex;
    align-items: center;
    justify-content: center;
}

svg {
    display: block;
    flex: none;
}

h1,
h2,
h3 {
    margin: 0;
    font-size: 26px;
    font-weight: normal;
}

/* Header */
.header {
    display: grid;
    grid-template-columns: 96px 1fr;
    grid-template-rows: 52px 51px;
    background-color: #3c3c3c;
}

.app-button {
    grid-row: 1 / 3;
    margin: 2px 2px 8px;
    border: 2px solid #ddd;
    background: linear-gradient(#c4c4c4, #8e8e8e 50%, #a8a8a8);
}

.titlebar {
    display: flex;
    align-items: stretch;
    background-color: #000;
    border-bottom: 2px solid #666;
}

.quick-access {
    display: flex;
    align-items: center;
    gap: 18px;
    width: 511px;
    padding: 4px 0 0 20px;
    background: linear-gradient(#666, #858585 60%, #5a5a5a);
}

.qa {
    width: 38px;
}

.qa-arrow {
    width: 10px;
}

.qa-more {
    width: 32px;
}

.title {
    flex: 1;
    padding: 4px 0 0 34px;
    line-height: 46px;
    text-align: center;
    color: #fff;
}

.search-toggle {
    width: 36px;
    background: linear-gradient(#8a8a8a, #555);
}

.search {
    width: 417px;
    margin-top: 4px;
    padding: 8px 6px 0;
    border: none;
    background-color: #f6f6f6;
    font: italic 25px "Open Sans", "Noto Sans", sans-serif;
}

.search::placeholder {
    color: #777;
}

.info-center {
    display: flex;
    align-items: center;
    width: 516px;
    padding: 6px 0 0 12px;
    background: linear-gradient(#666, #8a8a8a 60%, #666);
}

.sign-in {
    gap: 14px;
    margin-left: 20px;
    color: #fff;
}

.sign-arrow {
    margin-left: auto;
    margin-right: 22px;
}

.info-line {
    width: 2px;
    height: 36px;
    margin: 0 20px 0 22px;
    background-color: #999;
}

.info-center .qa-arrow:last-child {
    margin: 0 12px 0 16px;
}

.window-area {
    width: 263px;
    padding-left: 35px;
}

.window-buttons {
    display: flex;
    width: 220px;
    height: 39px;
    border: 2px solid #777;
    border-top: none;
    border-radius: 0 0 8px 8px;
}

.win {
    width: 62px;
    border-right: 2px solid #777;
}

.win-close {
    flex: 1;
    border-right: none;
}

.tabs {
    display: flex;
    align-items: flex-end;
    padding-left: 12px;
}

.tab {
    height: 41px;
    padding: 0 25px;
    line-height: 38px;
    color: #fff;
    text-decoration: none;
}

.tab.active {
    padding: 0 22px;
    border-radius: 4px 4px 0 0;
    background: linear-gradient(#d8d8d8, #fff);
    color: #333;
}

.ribbon-toggle {
    height: 41px;
    margin-left: 46px;
}

/* Ribbon */
.ribbon {
    display: flex;
    height: 248px;
    padding: 0 2px;
    background: linear-gradient(#ccc, #888);
    border-bottom: 17px solid #5e5e5e;
}

.panel {
    display: flex;
    flex-direction: column;
    border-right: 2px solid #999;
    background-color: #fcfcfc;
}

.panel-draw {
    width: 526px;
}

.panel-modify {
    width: 312px;
}

.panel-layers {
    width: 503px;
}

.panel-annotation {
    width: 201px;
}

.panel-block {
    width: 189px;
}

.panel-body {
    flex: 1;
    display: flex;
    justify-content: space-between;
    padding: 13px 6px 0 13px;
}

.panel-draw .panel-body {
    justify-content: flex-start;
    padding-left: 10px;
    gap: 12px;
}

.panel-block .panel-body {
    padding-left: 9px;
}

.panel-title {
    display: flex;
    align-items: center;
    justify-content: center;
    gap: 14px;
    height: 42px;
    padding-bottom: 4px;
    border-top: 2px solid #ccc;
    background-color: #eceaea;
}

.big {
    flex-direction: column;
    justify-content: flex-start;
    width: 84px;
    line-height: 54px;
}

.big svg:first-child {
    margin-bottom: -2px;
}

.column,
.panel-stack {
    display: flex;
    flex-direction: column;
    gap: 5px;
}

.panel-stack {
    flex: 1;
    padding: 13px 7px 0 10px;
}

.row {
    display: flex;
    height: 52px;
}

.row.end {
    justify-content: flex-end;
    gap: 10px;
    padding-right: 2px;
}

.group {
    display: flex;
    align-self: flex-start;
    height: 52px;
    border: 2px solid #d0d0d0;
    background-color: #f4f4f4;
}

.tool {
    width: 52px;
}

.tool + .tool,
.drop {
    border-left: 2px solid #d0d0d0;
}

.tool + .tool {
    width: 54px;
}

.drop {
    width: 28px;
}

.combo {
    align-items: center;
    border: 2px solid #d0d0d0;
    background: linear-gradient(#fafafa, #ececee);
}

.combo-select {
    flex: 1;
    appearance: none;
    border: none;
    background: none;
    font: inherit;
    color: #333;
}

.layer-select {
    padding-left: 8px;
}

.combo-arrow {
    margin-right: 6px;
}

.swatch {
    width: 34px;
    height: 34px;
    border: 3px solid #222;
    background-color: #fff;
}

.panel-small {
    align-items: center;
    justify-content: flex-start;
    width: 143px;
    padding-top: 10px;
    border-right: 3px solid #999;
    background: linear-gradient(#fff, #e6e7e7);
    line-height: 52px;
}

.small-arrow {
    margin: auto 0 13px;
}

/* Drawing area */
.canvas {
    flex: 1;
    position: relative;
    border: solid #999;
    border-width: 2px 5px 0 4px;
    border-right-color: #f4f4f4;
    background-color: #1e252f;
    background-image:
        linear-gradient(90deg, #2d3641 2px, transparent 2px),
        linear-gradient(#2d3641 2px, transparent 2px),
        linear-gradient(90deg, #212933 2px, transparent 2px),
        linear-gradient(#212933 2px, transparent 2px);
    background-size: 1460px 100%, 100% 1460px, 292px 100%, 100% 292px;
    background-position: 453px 0, 0 505px, 161px 0, 0 213px;
}

.view-label {
    position: absolute;
    left: 9px;
    top: 14px;
    font: 25px/30px "DejaVu Sans", sans-serif;
    color: #c8ccd4;
}

.geometry {
    position: absolute;
    left: 0;
    top: 434px;
}

.ucs {
    position: absolute;
    left: 20px;
    bottom: 13px;
}

.ucs-text {
    font: 300 43px "Open Sans", "Noto Sans", sans-serif;
    fill: #b4bac2;
}

.doc-buttons {
    position: absolute;
    top: 20px;
    right: 24px;
    display: flex;
    gap: 22px;
}

/* The compass letters sit over the ring */
.viewcube {
    position: absolute;
    top: 90px;
    right: 37px;
    width: 202px;
    height: 202px;
    display: flex;
    align-items: center;
    justify-content: center;
    border: 22px solid #40454f;
    border-radius: 50%;
    font: bold 36px "Liberation Sans", sans-serif;
    color: #b0b5bb;
}

.viewcube > span {
    position: absolute;
}

.north {
    top: -34px;
}

.south {
    bottom: -34px;
}

.west {
    left: -33px;
}

.east {
    right: -29px;
}

.cube-face {
    flex: none;
    width: 87px;
    height: 87px;
    background-color: #a9aeae;
}

.cube-face span {
    width: 51px;
    height: 51px;
    line-height: 51px;
    background-color: #9fa5ae;
    font: bold 18px/51px "Open Sans", "Noto Sans", sans-serif;
    color: #3c444c;
}

.wcs {
    position: absolute;
    top: 338px;
    right: 85px;
    width: 111px;
    height: 41px;
    gap: 14px;
    border-radius: 8px;
    border: 2px solid #8a8b98;
    background-color: #9a9ba8;
    font: 24px "Liberation Sans", sans-serif;
    color: #666874;
}

.navbar {
    position: absolute;
    top: 439px;
    right: 6px;
    border-radius: 8px;
    background-color: #525961;
}

/* Layout tabs */
.layouts {
    display: flex;
    height: 41px;
    padding: 0 0 5px 4px;
    border-left: 2px solid #999;
    background-color: #f0eeee;
}

.step {
    width: 35px;
    border-right: 2px solid #aaa;
    border-bottom: 2px solid #999;
}

.layout-tab {
    padding: 4px 12px 0 10px;
    font: 25px "Liberation Sans", sans-serif;
}

.layout-tab.current {
    width: 124px;
    padding: 4px 8px 0 0;
    margin-left: 2px;
    background-color: #1e252f;
    clip-path: polygon(0 0, 100% 0, 89% 100%, 9% 100%);
    color: #eee;
}

/* Command window */
.command {
    display: flex;
    height: 92px;
    padding-top: 8px;
    border-bottom: 2px solid #444;
    background-color: #5e5e5e;
}

.grip {
    width: 35px;
    padding-top: 6px;
    background-color: #999;
}

.grip::before {
    content: "";
    display: block;
    width: 28px;
    height: 10px;
    margin-left: 4px;
    background: repeating-linear-gradient(90deg, #222 0 2px, #999 2px 4px);
}

.command-lines {
    flex: 1;
    font: 27px "DejaVu Sans Mono", "Liberation Mono", monospace;
    color: #222;
}

.history {
    height: 43px;
    padding-left: 5px;
    line-height: 40px;
    border-bottom: 2px solid #999;
    background-color: #c2c3c2;
}

.prompt {
    display: flex;
    gap: 16px;
    height: 39px;
    padding: 2px 0 0 5px;
    line-height: 40px;
    background-color: #fcfefd;
}

.prompt input {
    flex: 1;
    padding: 0;
    border: none;
    background: none;
    font: inherit;
    color: inherit;
}

/* Status bar */
.status {
    display: flex;
    height: 51px;
    padding-right: 5px;
    border-bottom: 2px solid #555;
    background: linear-gradient(#6c6c6c, #999);
}

.coords {
    width: 341px;
    padding-left: 29px;
    font: 25px/54px "Liberation Sans", sans-serif;
    color: #222;
}

.toggles {
    display: grid;
    grid-template-columns: repeat(14, 1fr);
    width: 722px;
}

.toggles button,
.status-right button {
    border-right: 2px solid #666;
    background: linear-gradient(#a4a4a4, #b8b8b8);
}

.toggles .on {
    background: linear-gradient(#d6ecf4, #8cc0d2 50%, #c4ecf4);
}

.status-right {
    display: flex;
    margin-left: auto;
}

.status-right button {
    width: 51px;
}

.status-right .model {
    width: 103px;
    color: #222;
}

.space {
    width: 31px;
}

.space.narrow {
    width: 16px;
}

.status-right .scale {
    width: 119px;
    gap: 8px;
    color: #222;
}

.status-right .bulb {
    width: 76px;
    background: #777;
}

.status-right .thin {
    width: 26px;
}

/* Taskbar */
.taskbar {
    position: relative;
    display: flex;
    height: 70px;
    padding: 4px 0 4px 149px;
    gap: 9px;
    background: linear-gradient(#5c5c5c, #333 48%, #000 52%);
}

.start {
    position: absolute;
    left: 23px;
    top: -12px;
}

.task {
    width: 367px;
    justify-content: flex-start;
    gap: 7px;
    padding-left: 18px;
    border: 2px solid #555;
    border-radius: 6px;
    background: linear-gradient(#777, #333 48%, #000 52%);
    color: #eee;
}

.active-task {
    background: linear-gradient(#1c201e, #2c302e 48%, #000 52%);
}

.tray {
    display: flex;
    align-items: center;
    gap: 5px;
    margin-left: auto;
    margin-bottom: 6px;
    margin-right: 41px;
    color: #eee;
}

.keyboard {
    margin-right: 31px;
}

.chevron {
    margin-right: 8px;
}

.power {
    margin-left: 22px;
}

.clock {
    margin-left: 18px;
}

/* QuickCalc palette floats over the drawing */
.palette {
    position: absolute;
    left: 118px;
    top: 117px;
    display: flex;
    width: 750px;
    height: 994px;
    padding: 6px 6px 6px 0;
    border: 2px solid #666;
    border-radius: 8px 8px 3px 3px;
    background-color: #c8c9c7;
}

.palette-side {
    display: flex;
    flex-direction: column;
    align-items: center;
    width: 50px;
    padding-top: 8px;
}

.palette-close {
    padding-left: 8px;
}

.autohide {
    margin: 20px 0 19px;
}

.palette-name {
    margin-top: auto;
    writing-mode: vertical-rl;
    transform: rotate(180deg);
    font-size: 27px;
    line-height: 40px;
    color: #222;
}

.palette-icon {
    margin-top: 26px;
}

.palette-main {
    flex: 1;
    display: flex;
    flex-direction: column;
    padding: 27px 32px 0 42px;
    border: 2px solid #888;
    border-radius: 8px 8px 4px 4px;
    background-color: #efedee;
}

.calc-tools {
    display: flex;
    align-items: center;
    gap: 15px;
    height: 44px;
    margin-left: 3px;
}

.tool-line {
    width: 2px;
    height: 42px;
    background-color: #666;
}

.calc-history {
    height: 140px;
    margin: 27px 0 7px;
    resize: none;
    border: 2px solid #888;
    background-color: #fafcfb;
}

.calc-input {
    height: 46px;
    padding: 0 5px;
    border: 2px solid #b8cfe0;
    border-top: 3px solid #5c9cc4;
    border-radius: 3px;
    background-color: #fcfefd;
    font: bold 31px "Liberation Sans", sans-serif;
    color: #111;
}

.mode-row {
    display: flex;
    align-items: center;
    justify-content: space-between;
    height: 50px;
    margin: 25px 0 11px;
    padding: 0 0 0 4px;
    font-size: 27px;
    line-height: 40px;
    color: #2a2c4c;
}

.mode-row span {
    padding-bottom: 8px;
}

.mode-toggle {
    width: 48px;
    height: 48px;
    border: 4px solid #2c4c74;
    border-radius: 50%;
    background: linear-gradient(#fff, #ccd0d4);
}

.pad-scroll {
    display: grid;
    grid-template-columns: 1fr 38px;
    grid-template-rows: 546px 40px;
}

.pads {
    overflow: hidden;
}

.pad-title {
    display: flex;
    align-items: center;
    justify-content: space-between;
    height: 44px;
    padding: 0 18px 0 11px;
    border: 2px solid #999;
    background: linear-gradient(#b4b5b4, #9a9b99);
    font-weight: bold;
    font-size: 26px;
    color: #222;
}

.pad {
    display: grid;
    grid-template-columns: repeat(5, 85px);
    grid-auto-rows: 48px;
    gap: 15px 23px;
    margin-bottom: 10px;
    padding: 22px 0 27px 25px;
    border: solid #c4c4c4;
    border-width: 0 2px 2px;
}

.pad button {
    border: 2px solid #888;
    border-radius: 6px;
    background: linear-gradient(#f4f4f4, #e6e6e6 50%, #d2d3d3 52%, #dcdcdc);
    font-size: 27px;
    color: #222;
}

.vscroll {
    display: flex;
    flex-direction: column;
    align-items: center;
    padding: 17px 0 16px 3px;
    background-color: #f2f1f1;
}

.vthumb {
    width: 34px;
    height: 192px;
    margin-top: 18px;
    border: 2px solid #999;
    border-radius: 3px;
    background:
        repeating-linear-gradient(#666 0 3px, transparent 3px 8px) center / 16px 19px no-repeat,
        linear-gradient(90deg, #f6f6f6, #c8c9c9);
}

.hscroll {
    display: flex;
    align-items: center;
    padding: 0 14px 0 13px;
}

.hthumb {
    width: 456px;
    height: 35px;
    margin-left: 19px;
    border: 2px solid #999;
    border-radius: 3px;
    background:
        repeating-linear-gradient(90deg, #666 0 3px, transparent 3px 7px) center / 17px 16px no-repeat,
        linear-gradient(#f6f6f6, #c8c9c9);
}

.vscroll .scroll-end {
    margin-top: auto;
}

.hscroll .scroll-end {
    margin-left: auto;
}

/* Mouse pointer and text cursor */
.caret {
    position: absolute;
    left: 200px;
    top: 262px;
    width: 2px;
    height: 30px;
    background-color: #333;
}

.pointer {
    position: absolute;
    left: 164px;
    top: 284px;
}
```
